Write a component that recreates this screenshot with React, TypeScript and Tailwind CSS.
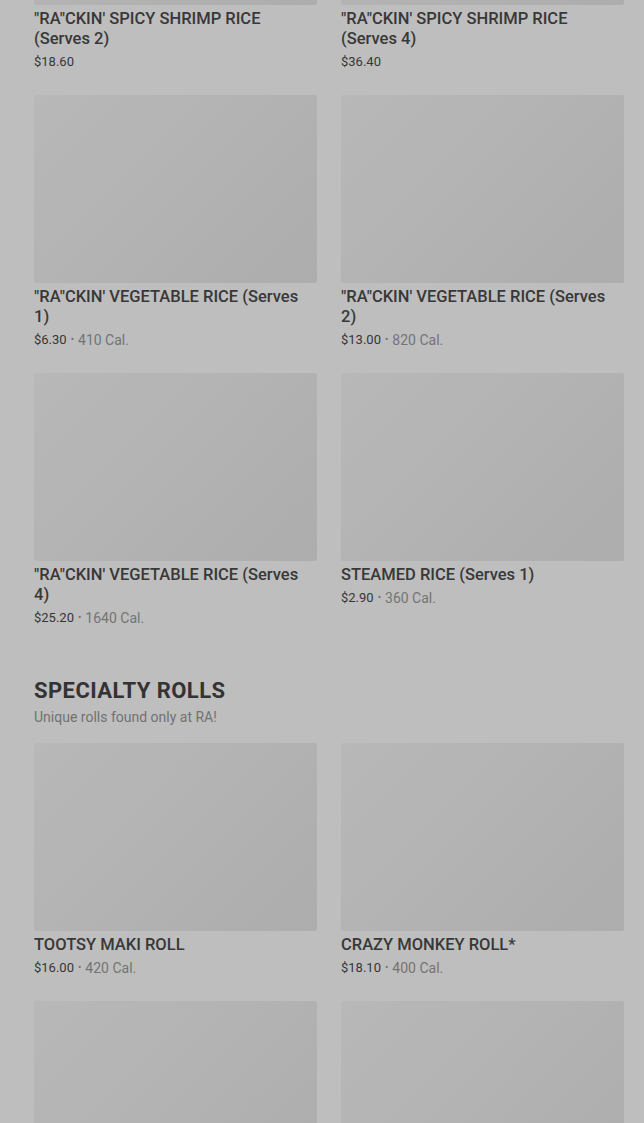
import * as React from 'react';

type Item = { name: string; price: string; cal?: string };

const riceItems: Item[] = [
  { name: '"RA"CKIN\' SPICY SHRIMP RICE (Serves 2)', price: '$18.60' },
  { name: '"RA"CKIN\' SPICY SHRIMP RICE (Serves 4)', price: '$36.40' },
  { name: '"RA"CKIN\' VEGETABLE RICE (Serves 1)', price: '$6.30', cal: '410 Cal.' },
  { name: '"RA"CKIN\' VEGETABLE RICE (Serves 2)', price: '$13.00', cal: '820 Cal.' },
  { name: '"RA"CKIN\' VEGETABLE RICE (Serves 4)', price: '$25.20', cal: '1640 Cal.' },
  { name: 'STEAMED RICE (Serves 1)', price: '$2.90', cal: '360 Cal.' },
];

const rollItems: Item[] = [
  { name: 'TOOTSY MAKI ROLL', price: '$16.00', cal: '420 Cal.' },
  { name: 'CRAZY MONKEY ROLL*', price: '$18.10', cal: '400 Cal.' },
];

const Thumb = () => (
  <div className="h-[188px] w-full rounded-[2px] bg-[linear-gradient(135deg,#b8b8b8_0%,#b3b3b3_45%,#adadad_100%)]" />
);

const MenuCard: React.FC<{ item: Item }> = ({ item }) => (
  <div className="flex flex-col">
    <Thumb />
    <div className="mt-[4px] pr-1 text-[16.5px] leading-5 font-medium text-[#383838]">{item.name}</div>
    <div className="mt-[3px] flex items-center text-[13px] leading-5 text-[#363636]">
      <span>{item.price}</span>
      {item.cal && (
        <>
          <span className="mx-[4px] text-[10px] text-[#727272]">•</span>
          <span className="text-[14px] text-[#747474]">{item.cal}</span>
        </>
      )}
    </div>
  </div>
);

export default function App() {
  return (
    <div className="h-[1123px] overflow-hidden bg-[#bebebe] font-['Roboto',sans-serif]">
      <div className="-mt-[183px] pl-[34px] pr-[20px]">
        <div className="grid grid-cols-2 gap-x-6 gap-y-[23px]">
          {riceItems.map((item, i) => <MenuCard key={i} item={item} />)}
        </div>

        {/* Specialty Rolls */}
        <div className="mt-[47px]">
          <h2 className="text-[22px] leading-8 font-bold tracking-[0.02em] text-[#333333]">SPECIALTY ROLLS</h2>
          <p className="text-[14px] leading-5 text-[#727272]">Unique rolls found only at RA!</p>
        </div>
        <div className="mt-4 grid grid-cols-2 gap-x-6 gap-y-[23px]">
          {rollItems.map((item, i) => <MenuCard key={i} item={item} />)}
          <Thumb />
          <Thumb />
        </div>
      </div>
    </div>
  );
}
